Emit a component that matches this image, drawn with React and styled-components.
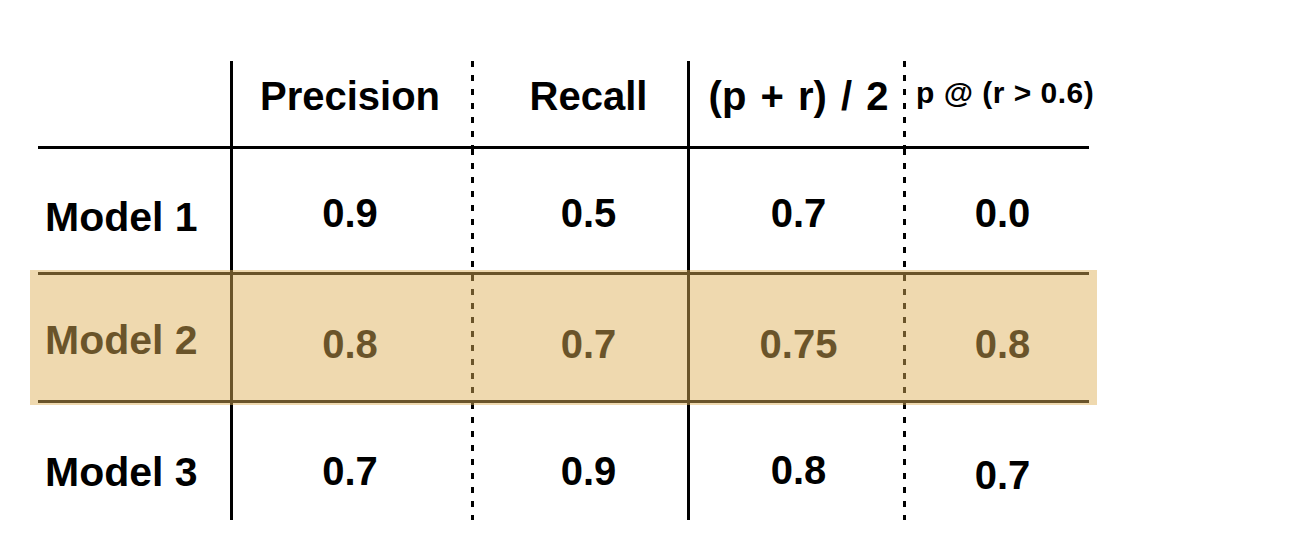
import React from "react";
import styled, { createGlobalStyle, css } from "styled-components";

const GlobalStyle = createGlobalStyle`
  html, body {
    margin: 0;
    padding: 0;
    background: #fff;
  }
  body {
    font-family: "Liberation Sans", Arial, Helvetica, sans-serif;
    font-weight: 700;
    color: #000;
  }
`;

const Page = styled.div`
  width: 1316px;
  height: 538px;
  box-sizing: border-box;
  padding: 61px 0 0 38px;
  overflow: hidden;
`;

const Table = styled.div`
  width: 1051px;
`;

const Row = styled.div`
  position: relative;
  display: grid;
  grid-template-columns: 192px 241px 216px 216px 186px;
  height: ${(p) => p.h}px;
  box-sizing: border-box;
  ${(p) => p.ruled && css`border-top: 3px solid #000;`}
  ${(p) =>
    p.highlight &&
    css`
      &::after {
        content: "";
        position: absolute;
        top: -5px;
        bottom: -5px;
        left: -8px;
        right: -8px;
        background: rgba(222, 175, 88, 0.48);
        pointer-events: none;
        z-index: 1;
      }
    `}
`;

const Cell = styled.div`
  box-sizing: border-box;
  padding-top: ${(p) => p.top}px;
  white-space: nowrap;
  ${(p) =>
    p.line === "solid" &&
    css`
      border-left: 3px solid #000;
    `}
  ${(p) =>
    p.line === "dashed" &&
    css`
      border-left: 3px solid transparent;
      background-image: repeating-linear-gradient(
        to bottom,
        #000 0 6px,
        transparent 6px 14px
      );
      background-size: 3px 100%;
      background-repeat: no-repeat;
      background-origin: border-box;
      background-position: left top;
    `}
`;

const LabelCell = styled(Cell)`
  padding-left: 7px;
  font-size: 41px;
  line-height: 41px;
`;

const ValueCell = styled(Cell)`
  text-align: center;
  padding-left: ${(p) => Math.max(0, p.shift * 2)}px;
  padding-right: ${(p) => Math.max(0, -p.shift * 2)}px;
  font-size: ${(p) => p.size || 40}px;
  line-height: ${(p) => p.size || 40}px;
  letter-spacing: ${(p) => (p.size ? "0.5px" : "0")};
  word-spacing: ${(p) => p.gap || 0}px;
`;

const columns = [
  { title: "Precision", line: "solid", shift: -2 },
  { title: "Recall", line: "dashed", shift: 8 },
  { title: "(p + r) / 2", line: "solid", shift: 2, gap: 3 },
  { title: "p @ (r > 0.6)", line: "dashed", shift: 5, size: 30, top: 17 },
];

const rows = [
  { label: "Model 1", values: ["0.9", "0.5", "0.7", "0.0"], h: 126, labelTop: 48, valueTop: [44, 44, 44, 44] },
  { label: "Model 2", values: ["0.8", "0.7", "0.75", "0.8"], h: 128, labelTop: 45, valueTop: [49, 49, 49, 49], highlight: true },
  { label: "Model 3", values: ["0.7", "0.9", "0.8", "0.7"], h: 120, labelTop: 49, valueTop: [48, 48, 47, 52] },
];

export default function App() {
  return (
    <>
      <GlobalStyle />
      <Page>
        <Table>
          <Row h={85}>
            <LabelCell top={0} />
            {columns.map((c) => (
              <ValueCell
                key={c.title}
                line={c.line}
                shift={c.shift}
                size={c.size}
                gap={c.gap}
                top={c.top || 15}
              >
                {c.title}
              </ValueCell>
            ))}
          </Row>
          {rows.map((r) => (
            <Row key={r.label} h={r.h} ruled highlight={r.highlight}>
              <LabelCell top={r.labelTop}>{r.label}</LabelCell>
              {r.values.map((v, i) => (
                <ValueCell
                  key={i}
                  line={columns[i].line}
                  shift={columns[i].shift}
                  top={r.valueTop[i]}
                >
                  {v}
                </ValueCell>
              ))}
            </Row>
          ))}
        </Table>
      </Page>
    </>
  );
}
